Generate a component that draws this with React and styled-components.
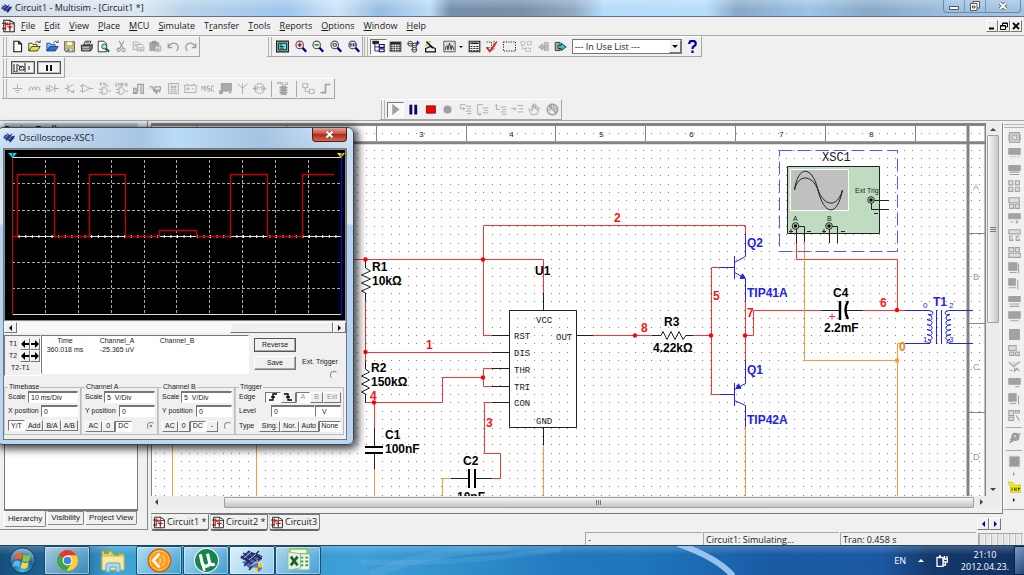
import React from "react";
import styled, { createGlobalStyle, css } from "styled-components";

const GlobalStyle = createGlobalStyle`
  * { box-sizing: border-box; }
  html, body, #root { height: 100%; }
  body {
    margin: 0;
    background: #f0f0f0;
    color: #1a1a1a;
    font-family: "Open Sans", "Noto Sans", sans-serif;
    font-size: 9px;
    line-height: 12px;
    overflow: hidden;
  }
  button, input, select { font: inherit; color: inherit; margin: 0; padding: 0; }
`;

/* ---------- icons, all on a 16 x 16 grid ---------- */

const magnifier = (inner) => (
  <g fill="none">
    <circle cx="7" cy="6" r="4.600" fill="#eee" stroke="#555" strokeWidth="1.400" />
    <path d="M10.500 9.500L15 14.500" stroke="#00007c" strokeWidth="2.800" />
    {inner}
  </g>
);

const icons = {
  page: <path d="M3.500 1.500h6l3.500 3.500v9.500h-9.500zM9.500 1.500v3.500h3.500" fill="#fff" stroke="#111" strokeWidth="1.300" />,
  sample: (
    <g>
      <path d="M1 13.500V4h4l1 1.500h5V8" fill="#ffffa0" stroke="#222" />
      <path d="M1 13.500L4.500 8H15l-3.500 5.500z" fill="#e6e63c" stroke="#222" />
      <path d="M9 3q3-3 5 0M12.500 3H15V0.500" fill="none" stroke="#222" />
    </g>
  ),
  open: (
    <g>
      <path d="M1 13.500V4h4l1 1.500h5V8" fill="#8cbcf4" stroke="#123a80" />
      <path d="M1 13.500L4.500 8H15l-3.500 5.500z" fill="#2a6fdc" stroke="#123a80" />
      <path d="M9 3q3-3 5 0M12.500 3H15V0.500" fill="none" stroke="#123a80" />
    </g>
  ),
  save: (
    <g>
      <path d="M2 2h12v12.500H3.500L2 13z" fill="#c8c87c" stroke="#444" />
      <path d="M4.500 2h7v5h-7z" fill="#ffffa0" />
      <path d="M5 10h6v4H5z" fill="#f6f6f6" stroke="#666" strokeWidth=".6" />
      <path d="M6 11h2v3H6z" fill="#333" />
    </g>
  ),
  print: (
    <g stroke="#111">
      <path d="M4.500 6l2-4.500h7L11.500 6z" fill="#fff" />
      <path d="M1.500 6.500h12l1.500-1.500v5.500l-2 3h-11z" fill="#777" />
      <path d="M3 9h8M3 12h8" stroke="#ddd" />
      <path d="M7 3.500h4" />
    </g>
  ),
  preview: (
    <g>
      <path d="M1.500 1.500h7l3 3v10h-10z" fill="#fff" stroke="#111" />
      <circle cx="9" cy="8" r="3.200" fill="#9de8e8" stroke="#222" />
      <path d="M11 10.500l4 4" stroke="#175a6a" strokeWidth="2.400" />
    </g>
  ),
  cut: (
    <g fill="none" stroke="#9a9a9a" strokeWidth="1.300">
      <path d="M5 1l5 9M11 1L6 10" />
      <circle cx="4.500" cy="12" r="2" />
      <circle cx="10.500" cy="12.500" r="2" />
    </g>
  ),
  copy: (
    <g fill="#f2f2f2" stroke="#a0a0a0">
      <path d="M1.500 2.500h6l2 2v7h-8z" />
      <path d="M6.500 5.500h6l2 2v6h-8z" />
      <path d="M3 5.500h3M3 7.500h3M8 9.500h5M8 11.500h5" />
    </g>
  ),
  paste: (
    <g>
      <path d="M1 3h11v10H1z" fill="#a6a6a6" />
      <path d="M4 1.500h5v2.500H4z" fill="#888" />
      <path d="M7.500 7.500h7v6h-7z" fill="#eee" stroke="#999" />
      <path d="M9 10h4M9 12h4" stroke="#999" />
    </g>
  ),
  undo: <path d="M1.500 4v5.500h5M1.500 9Q6 2 11 4.500t1 9" fill="none" stroke="#9c9c9c" strokeWidth="1.500" />,
  redo: <path d="M14.500 4v5.500h-5M14.500 9Q10 2 5 4.500t-1 9" fill="none" stroke="#9c9c9c" strokeWidth="1.500" />,
  full: (
    <g>
      <path d="M.5 1.500h15v13H.5z" fill="#9aa" stroke="#222" strokeWidth="1.500" />
      <path d="M3 4h10v8H3z" fill="#5be5e5" stroke="#111" />
      <path d="M4.500 6h3M4.500 8h5M4.500 10h5" stroke="#111" />
    </g>
  ),
  zoomIn: magnifier(<path d="M4.500 6h5M7 3.500v5" stroke="#c00000" strokeWidth="1.800" />),
  zoomOut: magnifier(<path d="M4.500 6h5" stroke="#0a8a0a" strokeWidth="1.800" />),
  zoomArea: magnifier(<path d="M5 4.500h4v3H5z" stroke="#222" />),
  zoomFit: magnifier(<path d="M4 4v4M6 4v4M8 4v4M10 4v4" stroke="#00007c" />),
  tree: (
    <g fill="#fff" stroke="#111">
      <path d="M3.500 4v9.500H9M3.500 8.500H9" fill="none" />
      <path d="M1 1.500h7v3H1z" fill="#222" />
      <path d="M9 5.500h6v3.500H9zM9 11h6v3.500H9z" stroke="#0a0a80" strokeWidth="1.400" />
    </g>
  ),
  sheet: (
    <g>
      <path d="M1 2h14v12.500H1z" fill="#222" />
      <path d="M2 6.500h12M2 9h12M2 11.500h12M5 5v9M8 5v9M11 5v9" stroke="#e8e8e8" />
    </g>
  ),
  database: (
    <g fill="#eee" stroke="#222">
      <circle cx="4" cy="4.500" r="3" />
      <circle cx="9" cy="7" r="3" />
      <circle cx="9" cy="12" r="3" />
      <path d="M1 4.500h6M6 7h6M6 12h6" />
      <path d="M13 1v5M10.500 3.500h5" stroke="#1414b4" strokeWidth="1.600" />
    </g>
  ),
  wizard: (
    <g fill="none" stroke="#111">
      <path d="M2 14.500h12v-4L8 8 2 10.500z" fill="#eee" strokeWidth="1.500" />
      <path d="M3 2l8 8" stroke="#111" strokeWidth="2" />
      <path d="M2 6l2 1M7 1l1 2" stroke="#d9a400" strokeWidth="1.600" />
    </g>
  ),
  grapher: (
    <g fill="none">
      <path d="M1 1.500h14v13H1z" fill="#ddd" stroke="#444" />
      <path d="M3 12V9l2-2 1 5 2-8 2 8 1-5 2 3v2" stroke="#333" strokeWidth="1.200" />
    </g>
  ),
  calc: (
    <g>
      <path d="M1.500 1.500h13v13h-13z" fill="#f2f2f2" stroke="#222" strokeWidth="1.400" />
      <path d="M3 4h10" stroke="#222" strokeWidth="2" />
      <path d="M3 8h2.500m1 0H9m1 0h3M3 10.500h2.500m1 0H9m1 0h3M3 13h2.500m1 0H9m1 0h3" stroke="#333" strokeWidth="1.400" />
    </g>
  ),
  erc: (
    <g fill="none">
      <path d="M2 2.500h6v7H2M11 1v10l-3 2" stroke="#333" strokeDasharray="2 1" />
      <path d="M2 9l4 5 8.500-12" stroke="#e01010" strokeWidth="1.900" />
    </g>
  ),
  area: <path d="M.5 2.500h15v11H.5z" fill="none" stroke="#222" strokeDasharray="1.500 1.500" strokeWidth="1.300" />,
  hierarchy: (
    <g fill="none" stroke="#aaa" strokeWidth="1.200">
      <path d="M1 2h5v4H1zM9 2h5v4H9zM7 10h6v4H7zM3 6v5h4" strokeDasharray="2 1" />
    </g>
  ),
  back: (
    <g stroke="#aaa">
      <path d="M9 3h5v10H9z" fill="#c4c4c4" />
      <path d="M11 7H7V4.500L2 8.500l5 4V10h4z" fill="#b4b4b4" />
    </g>
  ),
  forward: (
    <g stroke="#222">
      <path d="M1.500 3h6v10h-6z" fill="#aaa" />
      <path d="M5 6.500h4V4l6 4.500-6 4.500v-2.500H5z" fill="#23cfcf" />
    </g>
  ),
  ground: <path d="M8 3v5M2 8h12M5 10.500h6M7 13h2" />,
  coil: <path d="M0 10h2q0-4 2-4t2 4q0-4 2-4t2 4q0-4 2-4t2 4h1.500" />,
  diode: <path d="M0 8h4m7 0h5M4 4v8l6-4zM11 3v10M1 4v8" />,
  transistor: <path d="M2 8h4M6 3v10M6 7l7-4M6 9l7 4M10 12.500h3v-3" />,
  analog: <path d="M3 3v10l9-5zM0 5h3M0 11h3M12 8h4" />,
  ttl: (
    <g>
      <path d="M5 7v8h4q5-4 0-8zM1 9h4M1 13h4M13 11h3" />
      <path d="M2 1.500h3M3.500 1.500V5M6 1.500h3M7.500 1.500V5M10 1.500V5h3" />
    </g>
  ),
  cmos: (
    <g>
      <path d="M5 7v8h4q5-4 0-8zM1 9h4M1 13h4M13 11h3" />
      <path d="M3 1.500H1V5h2M4.500 5V1.500l1 1 1-1V5M8 1.500h2V5H8zM15 1.500h-2.500v1.700H15V5h-2.500" />
    </g>
  ),
  digital: <path d="M2 13V8h3v5zM7 13V3h7v11h-3V3M1 14h6" strokeWidth="1.600" />,
  mixed: <path d="M1 8q2-6 4 0t3 3M7 6h7v4H7zM9 10v4l2-3v-1M13 10v3" strokeWidth="1.500" />,
  indicator: <path d="M2 2h12v12H2zM5 5h2v2H5zM9 5h2v2H9zM5 9h6v3H5z" />,
  power: <path d="M1 4h14v9H1zM4 4V2M12 4V2M3 8.500h4M5 6.500v4M9.500 8.500h3" />,
  misc: <path d="M0 11V5l2 3 2-3v6M6 5v6M11 5H8v3h3v3H8M16 5h-3v6h3" />,
  display: <path d="M3 2h12v9H3zM1 11h3v3H1zM12 13h3" fill="#aaa" strokeWidth="1.500" />,
  rf: <path d="M8 15V8M2 2l6 6 6-6M8 2v6" />,
  motor: <path d="M0 8h3M13 8h3M3 6v4M13 6v4M5 11V5l3 3 3-3v6M8 2q6 0 6 6t-6 6-6-6 6-6" />,
  mcu: (
    <g>
      <path d="M1 3V0l1.500 2L4 0v3M8 0H6v3h2M10 0v3h3V0" />
      <path d="M5 5h6v11H5z" fill="#aaa" />
      <path d="M3 7h10M3 10h10M3 13h10" strokeWidth="1.400" />
    </g>
  ),
  block: <path d="M1 2h6v5H1zM4 7v5h5M9 9h6v5H9z" />,
  bus: <path d="M2 13h6V3h6" strokeWidth="2" />,
  play: <path d="M4 1v14l9-7z" fill="#a0a0a0" stroke="none" />,
  pause: <path d="M3 2h3.500v12H3zM9 2h3.500v12H9z" fill="#05056b" stroke="none" />,
  stop: <path d="M3 3.500h11v9H3z" fill="#f00" stroke="#700" />,
  record: <circle cx="8" cy="8" r="5" fill="#a0a0a0" stroke="none" />,
  stepInto: <path d="M8 2H2v5h5M5 5l2 2-2 2M8 4h7M10 7h5M8 10h7M10 13h5" />,
  stepOver: <path d="M9 2H2v12h4M4 12l2 2-2 2M8 6h7M10 9h5M8 12h7" />,
  stepOut: <path d="M7 8H3V2M1 4l2-2 2 2M8 5h7M10 8h5M8 11h7M10 14h5" />,
  runTo: <path d="M0 7h6M4 5l2 2-2 2M8 3h7M10 7h5M8 11h7" />,
  hand: <path d="M4 14L1 8l1-1 3 3V3l1-1 1 5V1l2 1v5l1-4 1 1v5l2-4 1 1-3 8z" />,
  handOff: (
    <g>
      <path d="M4 14L1 8l1-1 3 3V3l1-1 1 5V1l2 1v5l1-4 1 1v5l2-4 1 1-3 8z" />
      <circle cx="8" cy="8" r="6.500" strokeWidth="1.600" />
      <path d="M3 3l10 10" strokeWidth="1.600" />
    </g>
  ),
  help: (
    <g fill="none" stroke="#00009a" strokeWidth="2.800">
      <path d="M4 5q0-4 4-4t4 3.500q0 2-2 3T8 11M8 13v3" />
    </g>
  ),
  circuit: (
    <g fill="none">
      <path d="M2 1.500h7l5 3v10H2z" fill="#fff" stroke="#222" strokeWidth="1.200" />
      <path d="M9 1.500v4h5" stroke="#222" />
      <path d="M4 3v10M4 6h5v6M6 9h6" stroke="#e01818" strokeWidth="1.500" />
      <path d="M0 5h4M0 11h4M6 4v3M9 9v5" stroke="#222" />
    </g>
  ),
  chip: (
    <g>
      <path d="M0 8l5-5 11 3-6 7z" fill="#3a48a8" />
      <path d="M2 4l11 7M1 6l10 7M5 2l10 7M12 2L4 12M15 5l-6 9" stroke="#151f66" strokeWidth="1.200" />
      <path d="M3 8l4-4M7 10l5-5" stroke="#b7c0f0" />
    </g>
  ),
};

const Svg = styled.svg`
  width: ${({ $size }) => $size || 13}px;
  height: ${({ $size }) => $size || 13}px;
  flex: none;
  display: block;
`;

const Icon = ({ name, size }) => (
  <Svg $size={size} viewBox="0 0 16 16" fill="none" stroke={/^(page|circuit|chip)$/.test(name) ? undefined : "#a0a0a0"} aria-hidden="true">
    {icons[name]}
  </Svg>
);

/* ---------- main window chrome ---------- */

const Window = styled.div`
  position: relative;
  display: flex;
  flex-direction: column;
  height: 100vh;
`;

const TitleBar = styled.header`
  display: flex;
  align-items: center;
  flex: none;
  height: 17px;
  padding-left: 1px;
  gap: 3px;
  border-bottom: 1px solid #66727e;
  background:
    linear-gradient(rgba(255, 255, 255, 0.25), rgba(255, 255, 255, 0) 60%),
    linear-gradient(90deg, #d5dfe9 0, #dbe7f3 14%, #b8d2ea 18%, #9ec6ee 28%, #cfe4f8 33%, #97bde2 37%, #b9dcf6 42%,
      #728fac 44%, #7890aa 51%, #8faac4 56%, #b4dcfb 59%, #b6ddfa 69%, #86a9ca 72%, #9cc3e8 79%, #86a9c8 85%, #9dbfe2 93%, #a2c2e4 100%);
`;

const WindowTitle = styled.h1`
  flex: 1;
  margin: 0;
  font-size: 9px;
  font-weight: 400;
  line-height: 12px;
`;

const CaptionButtons = styled.div`
  display: flex;
  align-self: flex-start;
  height: 13px;
  margin-right: 3px;
  border: 1px solid #6c88a6;
  border-top: 0;
  border-radius: 0 0 4px 4px;
`;

const CaptionButton = styled.button`
  display: grid;
  place-items: center;
  width: ${({ $wide }) => ($wide ? 34 : 21)}px;
  border: 0;
  border-right: ${({ $wide }) => ($wide ? 0 : "1px solid #7d99b6")};
  background: none;
`;

const MenuBar = styled.nav`
  display: flex;
  align-items: center;
  flex: none;
  height: 19px;
  padding: 0 2px;
  gap: 5px;
  border-bottom: 1px solid #a8a8a8;
`;

const MenuList = styled.ul`
  display: flex;
  flex: 1;
  gap: 9px;
  margin: 0;
  padding: 0;
  list-style: none;

  a {
    color: inherit;
    text-decoration: none;
  }
`;

const raised = css`
  border: 1px solid;
  border-color: #fff #777 #777 #fff;
  background: #f0f0f0;
`;

const sunken = css`
  border: 1px solid;
  border-color: #777 #fff #fff #777;
`;

const MdiButton = styled.button`
  ${raised}
  display: grid;
  place-items: center;
  width: 12px;
  height: 12px;
`;

const MdiButtons = styled.div`
  display: flex;
`;

const ToolArea = styled.div`
  flex: none;
  background: #f0f0f0;
`;

const ToolRow = styled.div`
  display: flex;
  height: 21px;
  padding-left: ${({ $indent }) => $indent || 2}px;
`;

const ToolBar = styled.div`
  display: flex;
  align-items: center;
  width: ${({ $width }) => $width}px;
  margin-left: ${({ $gap }) => $gap || 0}px;
  padding-left: 7px;
  border-right: 1px solid #a6a6a6;
  border-bottom: 1px solid #a6a6a6;
  border-top: 1px solid #fff;
  background: linear-gradient(#b4b4b4, #b4b4b4) 1px 0 / 1px 100% no-repeat,
    linear-gradient(#b4b4b4, #b4b4b4) 4px 0 / 1px 100% no-repeat;
`;

const ToolButton = styled.button`
  display: flex;
  align-items: center;
  justify-content: center;
  flex: ${({ $wide }) => ($wide ? "1.6 1 0" : "1 1 0")};
  min-width: 0;
  height: 16px;
  gap: 3px;
  border: 1px solid transparent;
  background: none;
  ${({ $pressed }) => $pressed && css`
    ${sunken}
    background: #f8f8f8;
  `}
`;

const ToolSeparator = styled.span`
  width: 1px;
  height: 16px;
  margin: 0 3px;
  background: #aaa;
`;

const Arrow = styled.span`
  width: 0;
  height: 0;
  border: ${({ $small }) => ($small ? 2 : 3)}px solid transparent;
  ${({ $dir, $color }) => {
    const c = $color || "#111";
    if ($dir === "left") return `border-right-color: ${c}; border-left-width: 0;`;
    if ($dir === "right") return `border-left-color: ${c}; border-right-width: 0;`;
    if ($dir === "up") return `border-bottom-color: ${c}; border-top-width: 0;`;
    return `border-top-color: ${c}; border-bottom-width: 0;`;
  }}
`;

const ComboBox = styled.div`
  display: flex;
  width: 110px;
  height: 15px;
  margin: 0 2px;
  border: 1px solid #777;
  background: #fff;

  select {
    flex: 1;
    min-width: 0;
    padding-left: 2px;
    border: 0;
    appearance: none;
    background: none;
    line-height: 12px;
  }
`;

const ComboArrow = styled.span`
  ${raised}
  display: grid;
  place-items: center;
  width: 12px;
`;

const SwitchButton = styled.button`
  display: flex;
  align-items: center;
  justify-content: center;
  width: 24px;
  height: 13px;
  margin-left: 2px;
  border: 2px solid #555;
  outline: 1px solid #bbb;
  outline-offset: -2px;
  background: #f4f4f4;
`;

/* ---------- work area ---------- */

const WorkArea = styled.main`
  display: flex;
  flex: 1;
  min-height: 0;
  border-top: 1px solid #a6a6a6;
`;

const Dock = styled.aside`
  display: flex;
  flex-direction: column;
  width: 148px;
  margin-bottom: 2px;
  padding: 2px 9px 0 4px;
  border-right: 1px solid #888;
  border-bottom: 1px solid #888;
`;

const DockTitle = styled.h2`
  margin: 0;
  background: #bfcddb;
  font-size: 9px;
  font-weight: 600;
  line-height: 12px;
`;

const TreePane = styled.div`
  flex: 1;
  border: 1px solid #777;
  border-bottom-width: 2px;
  background: #fff;
`;

const DockTabs = styled.div`
  display: flex;
  flex: none;
  height: 18px;
  align-items: flex-start;
  gap: 1px;
`;

const DockTab = styled.button`
  height: ${({ $active }) => ($active ? 16 : 14)}px;
  padding: 0 3px;
  border: 1px solid #888;
  border-top: ${({ $active }) => ($active ? 0 : "1px solid #888")};
  border-left-color: #fff;
  border-radius: 0 0 2px 2px;
  background: #f0f0f0;
  font-family: "Liberation Sans", Arial, sans-serif;
  font-size: 8px;
  line-height: ${({ $active }) => ($active ? 16 : 12)}px;
  white-space: nowrap;
`;

const Documents = styled.section`
  display: flex;
  flex: 1;
  min-width: 0;
  flex-direction: column;
  margin-left: 3px;
  padding-top: 2px;
`;

const DocumentFrame = styled.div`
  display: flex;
  flex: 1;
  min-height: 0;
  flex-direction: column;
  padding-right: 3px;
  padding-bottom: 5px;
  border-right: 1px solid #888;
  border-bottom: 1px solid #777;
`;

const SheetRow = styled.div`
  display: flex;
  flex: 1;
  min-height: 0;
`;

const Sheet = styled.svg`
  flex: 1;
  min-width: 0;
  height: 100%;
  background: #fff;
`;

const ScrollBar = styled.div`
  display: flex;
  flex: none;
  align-items: center;
  justify-content: space-between;
  background: #ececec;
  ${({ $vertical }) => ($vertical
    ? "flex-direction: column; width: 13px; padding: 5px 0;"
    : "height: 12px; padding: 0 16px 0 4px;")}
`;

const ScrollThumb = styled.div`
  display: grid;
  place-items: center;
  border: 1px solid #a0a0a0;
  border-radius: 1px;
  ${({ $vertical }) => ($vertical
    ? `width: 12px; height: 188px; margin: 4px 0 auto;
       background: linear-gradient(90deg, #f6f6f6, #c8c8c8);`
    : `flex: 1; height: 11px; margin-left: 66px; margin-right: 6px;
       background: linear-gradient(#f6f6f6, #c4c4c4);`)}
`;

const Grip = styled.span`
  width: 6px;
  height: 5px;
  background: repeating-linear-gradient(${({ $vertical }) => ($vertical ? "0deg" : "90deg")}, #777 0 1px, transparent 1px 2px);
`;

const DocumentTabs = styled.div`
  display: flex;
  flex: none;
  height: 18px;
  align-items: flex-start;
  gap: 1px;
`;

const DocumentTab = styled.button`
  display: flex;
  align-items: center;
  height: 17px;
  min-width: ${({ $narrow }) => ($narrow ? 51 : 58)}px;
  padding: 1px;
  gap: 1px;
  border: 1px solid #777;
  border-top-color: ${({ $active }) => ($active ? "transparent" : "#777")};
  border-left-color: #ccc;
  border-bottom: 2px solid #666;
  border-radius: 0 0 3px 3px;
  background: #f0f0f0;
  line-height: 12px;
  white-space: nowrap;
`;

const TabScroll = styled.div`
  display: flex;
  margin: 4px 2px 0 auto;
`;

const Instruments = styled.aside`
  display: flex;
  flex-direction: column;
  align-items: center;
  justify-content: space-between;
  width: 21px;
  margin-bottom: 22px;
  padding: 10px 0 6px;
  border-bottom: 1px solid #a6a6a6;
  border-left: 1px solid #fff;
  background:
    linear-gradient(#b4b4b4, #b4b4b4) 0 3px / 100% 1px no-repeat,
    linear-gradient(#b4b4b4, #b4b4b4) 0 6px / 100% 1px no-repeat;

  hr {
    width: 16px;
    margin: 1px 0;
    border: 0;
    border-top: 1px solid #aaa;
  }
`;

const InstrumentButton = styled.button`
  display: grid;
  place-items: center;
  width: 16px;
  height: ${({ $short }) => ($short ? 6 : 13)}px;
  border: 0;
  background: none;
`;

const StatusBar = styled.footer`
  display: grid;
  grid-template-columns: 1fr 117px 136px 136px 47px;
  gap: 1px;
  flex: none;
  height: 13px;
  line-height: 13px;
`;

const StatusCell = styled.div`
  padding-left: 2px;
  border-top: 1px solid #a8a8a8;
  border-left: 1px solid #a8a8a8;
`;

const StatusMeter = styled(StatusCell)`
  margin: 1px 1px 0;
  background: repeating-linear-gradient(90deg, #bdbdbd 0 1px, #e6e6e6 1px 5px, #f4f4f4 5px 6px);
`;

/* ---------- taskbar ---------- */

const TaskBar = styled.footer`
  display: flex;
  align-items: stretch;
  flex: none;
  height: 30px;
  border-top: 1px solid #24465f;
  color: #fff;
  background:
    linear-gradient(rgba(255, 255, 255, 0.2), rgba(255, 255, 255, 0) 30%),
    linear-gradient(90deg, #15507c 0, #256e9f 8%, #3ea6d7 11%, #3693cb 25%, #3fa0d8 35%, #2f8cca 46%, #2178bd 56%, #1f76ba 63%, #1a5ba6 75%, #1b58a2 86%, #14386b 91%, #103263 100%);
`;

const TaskButton = styled.button`
  display: grid;
  place-items: center;
  width: ${({ $start }) => ($start ? 44 : 46)}px;
  margin-right: ${({ $gap }) => $gap || 0}px;
  border: ${({ $plain }) => ($plain ? "1px solid transparent" : "1px solid #1b4e70")};
  border-radius: 2px;
  box-shadow: ${({ $plain }) => ($plain ? "none" : "inset 0 0 0 1px rgba(255, 255, 255, 0.4)")};
  background: ${({ $plain, $active }) =>
    $plain ? "none"
      : $active ? "linear-gradient(135deg, #dff1fb, #8fcbec)"
        : "linear-gradient(135deg, rgba(210, 238, 250, 0.75), rgba(80, 170, 215, 0.4))"};
`;

const Beam = styled.svg`
  flex: 1;
  min-width: 0;
  height: 29px;
`;

const Tray = styled.div`
  display: flex;
  align-items: center;
  gap: 12px;
`;

const Clock = styled.time`
  width: 50px;
  text-align: center;
  line-height: 12px;
`;

const ShowDesktop = styled.button`
  align-self: stretch;
  width: 10px;
  margin-left: -8px;
  border: 1px solid #0a2344;
  border-right: 0;
  background: linear-gradient(135deg, #7d9cc0, #24497c);
`;

/* ---------- oscilloscope ---------- */

const ScopeWindow = styled.section`
  position: absolute;
  left: -3px;
  top: 127px;
  width: 357px;
  height: 318px;
  padding: 0 6px 4px 5px;
  border: 1px solid #3b4754;
  border-radius: 6px;
  box-shadow: 2px 2px 8px 2px rgba(0, 0, 0, 0.75);
  background: linear-gradient(#dbe9f6 0, #c3dbf1 7%, #dcebf8 30%, #b3d2f2 31%, #b9d6f5 100%);
  font-family: "Liberation Sans", Arial, sans-serif;
  font-size: 7px;
  line-height: 8px;
`;

const ScopeTitle = styled.header`
  display: flex;
  align-items: center;
  height: 20px;
  gap: 4px;
  background: linear-gradient(90deg, transparent, #a7c6e6 40%, #b9dcf8 50%, #a3c4e4 75%, transparent);
  font-family: "Open Sans", "Noto Sans", sans-serif;

  h2 {
    flex: 1;
    margin: 0;
    font-size: 9px;
    font-weight: 400;
    line-height: 12px;
  }
`;

const CloseButton = styled.button`
  display: grid;
  place-items: center;
  align-self: flex-start;
  width: 35px;
  height: 14px;
  border: 1px solid #5a1a1a;
  border-top: 0;
  border-radius: 0 0 4px 4px;
  background: linear-gradient(#dfa49a, #c9503f 45%, #b02b1c 50%, #d3694f);
`;

const ScopeBody = styled.div`
  display: flex;
  flex-direction: column;
  height: 292px;
  border: 1px solid #777;
  background: #f0f0f0;
`;

const ScopeScreen = styled.svg`
  display: block;
  width: 100%;
  height: 172px;
  border: 1px solid #888;
  background: #000;
`;

const ScopeScroll = styled.div`
  display: flex;
  justify-content: space-between;
  height: 11px;
  margin-top: 1px;
  background: #f8f8f8;

  button {
    ${raised}
    display: grid;
    place-items: center;
    width: 13px;
  }
`;

const ScopeThumb = styled.div`
  ${raised}
  width: 103px;
  margin-left: auto;
`;

const Readings = styled.div`
  display: flex;
  height: 50px;
  padding-top: 2px;
`;

const Cursors = styled.div`
  ${sunken}
  display: grid;
  grid-template-columns: 15px 10px 10px;
  grid-template-rows: 12px 12px 12px;
  align-items: center;
  width: 37px;
  height: 41px;
  padding-top: 2px;
`;

const CursorName = styled.span`
  padding-left: 4px;
`;

const CursorButton = styled.button`
  ${raised}
  display: grid;
  place-items: center;
  width: 10px;
  height: 12px;
`;

const CursorDelta = styled.span`
  grid-column: 1 / -1;
  padding-left: 6px;
`;

const ReadingBox = styled.div`
  ${sunken}
  width: 208px;
  height: 39px;
  background: #fff;
  line-height: 9px;
`;

const ReadingTable = styled.table`
  border-collapse: collapse;
  text-align: center;

  th {
    padding: 0;
    font-weight: 400;
  }

  td { padding: 0; }
  th:nth-child(1) { width: 46px; }
  th:nth-child(2) { width: 58px; }
  th:nth-child(3) { width: 62px; }
`;

const Actions = styled.div`
  display: flex;
  flex-direction: column;
  gap: 4px;
  margin: 3px 6px 0 5px;
`;

const PushButton = styled.button`
  width: 42px;
  height: 14px;
  border: 1px solid;
  border-color: ${({ $main }) => ($main ? "#555" : "#fff #777 #777 #fff")};
  box-shadow: inset -1px -1px #aaa;
  background: #f0f0f0;
`;

const ExtTrigger = styled.label`
  display: flex;
  flex-direction: column;
  align-items: flex-end;
  gap: 5px;
  margin-top: 23px;
  white-space: nowrap;
`;

const Radio = styled.input.attrs({ type: "radio" })`
  width: 8px;
  height: 8px;
  border: 1px solid #888;
  border-right-color: #eee;
  border-bottom-color: #eee;
  border-radius: 50%;
  appearance: none;
  background: ${({ checked }) => (checked ? "radial-gradient(#888 25%, #f4f4f4 40%)" : "#f4f4f4")};
`;

const Controls = styled.div`
  display: grid;
  grid-template-columns: 77px 77px 77px 109px;
  height: 49px;
`;

const Group = styled.fieldset`
  min-width: 0;
  margin: 0;
  padding: 0 2px 0 3px;
  border: 1px solid #bbb;
  border-left-color: #ccc;

  legend {
    padding: 0 1px;
    line-height: 8px;
  }
`;

const Field = styled.div`
  display: flex;
  align-items: center;
  justify-content: space-between;
  height: 12px;
  margin-bottom: ${({ $last }) => ($last ? 3 : 2)}px;
  white-space: nowrap;
`;

const TextBox = styled.input`
  ${sunken}
  width: ${({ $width }) => $width}px;
  height: 12px;
  padding-left: 2px;
  border-top-width: 2px;
  background: #fff;
`;

const SmallButton = styled.button`
  ${raised}
  display: grid;
  place-items: center;
  flex: 1 1 auto;
  min-width: 8px;
  height: 11px;
  color: ${({ disabled }) => (disabled ? "#999" : "inherit")};
  ${({ $on }) => $on && css`
    ${sunken}
    background: #fbfbfb;
  `}
`;

const ButtonStrip = styled.div`
  display: flex;
  align-items: center;
  width: ${({ $width }) => $width}px;
`;

/* ---------- schematic ---------- */

const RED = "#f83434";
const LABEL_RED = "#f81414";
const ORANGE = "#f99a3c";
const BLUE = "#2222f0";

const NetLabel = styled.text`
  font: bold 12px "Liberation Sans", Arial, sans-serif;
  fill: ${({ $color }) => $color || "#000"};
`;

const PinLabel = styled.text`
  font: ${({ $size }) => $size || 9}px "Liberation Mono", "Courier New", monospace;
  fill: #222;
`;

const SmallLabel = styled.text`
  font: ${({ $size }) => $size || 9}px "Liberation Sans", Arial, sans-serif;
  fill: ${({ $color }) => $color || "#222"};
`;

const dotPath = () => {
  let d = "";
  for (let y = 150; y < 496; y += 8.41) {
    for (let x = 155.3; x < 984; x += 8.41) {
      d += `M${Math.round(x)} ${Math.round(y)}h1v1h-1z`;
    }
  }
  for (let x = 155.3; x < 984; x += 8.41) d += `M${Math.round(x)} 133h1v1h-1z`;
  return d;
};

const parts = [
  [372, 271, "R1"], [372, 285, "10kΩ"], [371, 372, "R2"], [371, 386, "150kΩ"],
  [385, 439, "C1"], [385, 453, "100nF"], [463, 465, "C2"], [457, 501, "10nF"],
  [535, 275, "U1"], [664, 326, "R3"], [653, 352, "4.22kΩ"],
  [833, 297, "C4"], [824, 332, "2.2mF"],
  [747, 247, "Q2", BLUE], [747, 297, "TIP41A", BLUE], [747, 374, "Q1", BLUE], [747, 424, "TIP42A", BLUE],
  [933, 306, "T1", BLUE],
  [614, 222, "2", LABEL_RED], [426, 349, "1", LABEL_RED], [370, 400, "4", LABEL_RED], [486, 427, "3", LABEL_RED],
  [641, 332, "8", LABEL_RED], [713, 300, "5", LABEL_RED], [747, 317, "7", LABEL_RED], [880, 307, "6", LABEL_RED],
  [899, 351, "0", "#f08010"],
];

const pins = [
  [536, 323, "VCC"], [514, 339, "RST"], [514, 356, "DIS"], [514, 373, "THR"],
  [514, 390, "TRI"], [514, 406, "CON"], [556, 340, "OUT"], [536, 424, "GND"],
];

const Schematic = () => (
  <Sheet role="img" aria-label="Circuit1 schematic">
    <g transform="translate(-151 -123)">
      <path d={dotPath()} fill="#858585" />

      <g fill="none" stroke="#848484">
        <path d="M151 124.500H986" strokeWidth="3" />
        <path d="M151 142.700H986M968 125V496" strokeWidth="3" />
        <path d="M985.500 125V496" strokeWidth="2" />
        <path d="M196.500 126V141M286.500 126V141M376.500 126V141M466.500 126V141M555.500 126V141M645.500 126V141M735.500 126V141M825.500 126V141M915.500 126V141M969 233.500H985M969 323.500H985M969 412.500H985" />
        <path d="M151.500 124V496" />
      </g>
      {[1, 2, 3, 4, 5, 6, 7, 8].map((n) => (
        <PinLabel key={n} x={149 + n * 90} y={137} $size={8}>{n}</PinLabel>
      ))}
      {["A", "B", "C", "D"].map((c, i) => (
        <SmallLabel key={c} x={973} y={190 + i * 90} $color="#999">{c}</SmallLabel>
      ))}

      <g fill="none" stroke={RED}>
        <path d="M350 259.500H543.500V293M492 335.500H483.500V225.500H745.500V234" />
        <path d="M365.500 301V361M365.500 352.500H492M365.500 402.500H442.500V377.500H483.500M492 368.500H483.500V386.500H492" />
        <path d="M374.500 402V428M492 402.500H484.500V453.500H500.500V478.500H492" />
        <path d="M593 335.500H652M693 335.500H711.500M720 267.500H711.500V394.500H720M745.500 301V360" />
        <path d="M745 335.500H753.500V310.500H822M863 310.500H905M796.500 243V259.500H897.500V310" />
        <path d="M829 316.500h6M832 313.500v6" />
      </g>
      <g fill="none" stroke={ORANGE}>
        <path d="M172.500 400V496M256.500 400V496" />
        <path d="M374.500 469V496M451 478.500H442.500V496M543.500 445V496M745.500 427V496" />
        <path d="M804.500 242V360.500H897.500M905 343.500H897.500V496" />
      </g>
      <g fill="none" stroke="#222">
        <path d="M365.500 259v9l5 3-9 4 9 4-9 4 9 4-9 4 4 2v8" />
        <path d="M365.500 361v8l4 3-8 4 8 4-8 4 8 4-8 4 4 2v9" />
        <path d="M374.500 428V446M374.500 453V469M492 478.500H475M468 478.500H451" />
        <path d="M543.500 293V310M543.500 427V445M492 335.500H509M492 352.500H509M492 368.500H509M492 386.500H509M492 402.500H509M577 335.500H593" />
        <path d="M509.500 310.500H576.500V427.500H509.500z" />
        <path d="M652 335.500h9l2-4 4 8 4-8 4 8 4-8 4 8 3-4h7" />
        <path d="M822 310.500H839M846 310.500H863" />
      </g>
      <g fill="none" stroke="#000" strokeWidth="2">
        <path d="M365 447H383M365 453H383M469 469V488M475 469V488" />
        <path d="M840 301V320M848 301q-5 9 0 18" strokeWidth="2.500" />
      </g>

      <g fill="none" stroke={BLUE}>
        <path d="M720 267.500H734.500M734.500 256V279M734.500 262.500L745.500 256.500V234M734.500 272.500L745.500 278.500V301" />
        <path d="M720 394.500H734.500M734.500 383V406M734.500 389.500L745.500 383.500V360M734.500 400.500L745.500 405.500V427" />
        <path d="M740 278.500l5-.2-2.500-4.500zM736 388.500l5-.2-2.500-4.500z" fill={BLUE} />
        <path d="M905 310.500H930M905 343.500H930M949 310.500H973M949 343.500H973M936.500 310V344M941.500 310V344" />
        <path d="M929 310.500q5 1 4 3t-5 1q5 1 4 4t-5 1q6 1 5 4t-5 1q6 1 5 4t-5 1q6 1 5 4t-5 1q6 1 5 4t-4 1q4 1 3 3l-6 1" />
        <path d="M949 310.500q-5 1-4 3t5 1q-5 1-4 4t5 1q-6 1-5 4t5 1q-6 1-5 4t5 1q-6 1-5 4t5 1q-6 1-5 4t4 1q-4 1-3 3l6 1" />
        <path d="M779.500 150.500H897.500V251.500H779.500z" stroke="#5555f4" strokeDasharray="13 5" />
      </g>

      <g fill="#f00">
        {[[365.500, 259.500], [483, 259.500], [365.500, 352], [483, 377.500], [374, 402.500], [635, 335.500], [711, 335.500], [745, 335.500], [897, 310]].map(([x, y]) => (
          <circle key={`${x}-${y}`} cx={x} cy={y} r="2.200" />
        ))}
        <circle cx="897" cy="360.500" r="2.200" fill={ORANGE} />
      </g>

      <path d="M787.500 166.500H879.500V233.500H787.500z" fill="#c0dcc0" stroke="#222" />
      <path d="M790.500 169.500H848.500V210.500H790.500z" fill="#c0c0c0" stroke="#fff" />
      <g fill="none" stroke="#222">
        <path d="M794.500 190C798 165 812 165 818 190S837 218 842.500 190" />
        <path d="M794.500 190C798 174 812 174 818 190S837 209 842.500 190" />
        <path d="M796.500 229V243M796.500 226.500H804.500V242M829.500 229V243M829.500 226.500H837.500V243" />
        <path d="M871.500 200.500H889M871.500 200V209.500H889M807 231.500h4M841 231.500h4M874 213.500h4M789 231.500h4M791 229v4M822 231.500h4M824 229v4" />
      </g>
      {[[795.500, 226], [829, 226], [871, 200]].map(([x, y]) => (
        <g key={x}>
          <circle cx={x} cy={y} r="3.300" fill="#c0dcc0" stroke="#222" />
          <circle cx={x} cy={y} r="1.800" fill="#000" />
        </g>
      ))}
      <SmallLabel x={855} y={193} $size={7}>Ext Trig</SmallLabel>
      <SmallLabel x={793} y={221} $size={7}>A</SmallLabel>
      <SmallLabel x={827} y={221} $size={7}>B</SmallLabel>
      <PinLabel x={822} y={161} $size={12}>XSC1</PinLabel>

      {pins.map(([x, y, label]) => <PinLabel key={label} x={x} y={y}>{label}</PinLabel>)}
      {parts.map(([x, y, label, color]) => <NetLabel key={label} x={x} y={y} $color={color}>{label}</NetLabel>)}
      <SmallLabel x={923} y={308} $size={8} $color={BLUE}>0</SmallLabel>
      <SmallLabel x={949} y={308} $size={8} $color={BLUE}>2</SmallLabel>
      <SmallLabel x={923} y={342} $size={8} $color={BLUE}>1</SmallLabel>
      <SmallLabel x={949} y={342} $size={8} $color={BLUE}>3</SmallLabel>
    </g>
  </Sheet>
);

/* ---------- components ---------- */

const menus = ["File", "Edit", "View", "Place", "MCU", "Simulate", "Transfer", "Tools", "Reports", "Options", "Window", "Help"];

const Menu = () => (
  <MenuBar aria-label="Main menu">
    <Icon name="circuit" size={14} />
    <MenuList>
      {menus.map((name) => {
        const at = name === "Transfer" ? 1 : 0;
        return (
          <li key={name}>
            <a href="#menu">{name.slice(0, at)}<u>{name[at]}</u>{name.slice(at + 1)}</a>
          </li>
        );
      })}
    </MenuList>
    <MdiButtons>
      <MdiButton aria-label="Minimize document"><Svg $size={8} viewBox="0 0 8 8"><path d="M1 6.500h5" stroke="#000" strokeWidth="2" /></Svg></MdiButton>
      <MdiButton aria-label="Restore document"><Svg $size={8} viewBox="0 0 8 8" fill="none" stroke="#000"><path d="M2.500 3V1h5v4H6M.5 3.500h5v4h-5zM.5 4h5M2.500 1.500h5" /></Svg></MdiButton>
      <MdiButton aria-label="Close document"><Svg $size={8} viewBox="0 0 8 8"><path d="M1 1l6 6M7 1L1 7" stroke="#000" strokeWidth="1.800" /></Svg></MdiButton>
    </MdiButtons>
  </MenuBar>
);

const Tools = ({ names, pressed }) => names.map((name, i) => (
  name === "|"
    ? <ToolSeparator key={i} />
    : (
      <ToolButton key={i} aria-label={name} $pressed={name === pressed} $wide={name === "grapher"}>
        <Icon name={name} />
        {name === "grapher" && <Arrow $small />}
      </ToolButton>
    )
));

const Toolbars = () => (
  <ToolArea>
    <ToolRow>
      <ToolBar $width={198}>
        <Tools names={["page", "sample", "open", "save", "print", "preview", "cut", "copy", "paste", "undo", "redo"]} />
      </ToolBar>
      <ToolBar $width={96} $gap={67}>
        <Tools names={["full", "zoomIn", "zoomOut", "zoomArea", "zoomFit"]} />
      </ToolBar>
      <ToolBar $width={339}>
        <Tools pressed="tree" names={["tree", "sheet", "database", "wizard", "grapher", "calc", "erc", "area", "hierarchy", "back", "forward"]} />
        <ComboBox>
          <select aria-label="In Use List"><option>--- In Use List ---</option></select>
          <ComboArrow><Arrow /></ComboArrow>
        </ComboBox>
        <Tools names={["help"]} />
      </ToolBar>
    </ToolRow>
    <ToolRow>
      <ToolBar $width={63}>
        <SwitchButton aria-label="Run switch">
          <Svg $size={20} viewBox="0 0 20 10" fill="none" stroke="#222"><path d="M1 1v8h3V1M6 7q0-4 3-4t2 4H6M5 2l4 3M12 0v10" /><path d="M16 3v4" /></Svg>
        </SwitchButton>
        <SwitchButton aria-label="Pause switch">
          <Svg $size={12} viewBox="0 0 12 12" stroke="#111" strokeWidth="2"><path d="M4 3v6M8 3v6" /></Svg>
        </SwitchButton>
      </ToolBar>
    </ToolRow>
    <ToolRow>
      <ToolBar $width={333}>
        <Tools
          names={["ground", "coil", "diode", "transistor", "analog", "ttl", "cmos", "digital", "mixed", "indicator", "power", "misc", "display", "rf", "motor", "|", "mcu", "|", "block", "bus"]}
        />
      </ToolBar>
    </ToolRow>
    <ToolRow $indent={380}>
      <ToolBar $width={182}>
        <Tools pressed="play" names={["play", "pause", "stop", "record", "stepInto", "stepOver", "stepOut", "runTo", "hand", "handOff"]} />
      </ToolBar>
    </ToolRow>
  </ToolArea>
);

const gridX = [44.5, 77.5, 110.5, 143.5, 175.5, 208.5, 241.5, 274.5, 307.5];
const gridY = [183.5, 210.5, 262.5, 288.5];

const Screen = () => (
  <ScopeScreen viewBox="4 150 340 170" preserveAspectRatio="xMinYMin meet" role="img" aria-label="Channel A trace">
    <g stroke="#aaa" fill="none">
      {gridX.map((x) => <path key={x} d={`M${x} 160V314`} strokeDasharray="3 2" />)}
      {gridY.map((y) => <path key={y} d={`M11 ${y}H341`} strokeDasharray="3 2" />)}
      <path d="M11 157.500H341M11 314.500H341" stroke="#ddd" />
      <path d="M11 236.500H341" stroke="#ddd" />
      <path d="M11 236.500H341" stroke="#fff" strokeWidth="3" strokeDasharray="1 5.600" />
    </g>
    <g fill="none">
      <path d="M11.500 157V315" stroke="#d00" />
      <path d="M11 236.500H16.500V174.500H53.500V236.500H88.500V174.500H124.500V236.500H158.500V230.500H195.500V236.500H229.500V174.500H266.500V236.500H301.500V174.500H333" stroke="#c80000" strokeWidth="1.300" />
      <path d="M340.500 157V315" stroke="#1010d0" strokeWidth="1.400" />
    </g>
    <path d="M7 153h9l-4.500 5z" fill="#00e0e0" />
    <path d="M336 153h8l-4 5z" fill="#f0f000" />
    <path d="M11.500 153v3M339.500 153.500h2l-2 2.500h2" stroke="#222" fill="none" strokeWidth=".8" />
  </ScopeScreen>
);

const CursorArrow = ({ back, label }) => (
  <CursorButton aria-label={label}>
    <Svg $size={8} viewBox="0 0 8 8"><path d={back ? "M0 4l4-4v3h4v2H4v3z" : "M8 4L4 0v3H0v2h4v3z"} fill="#000" /></Svg>
  </CursorButton>
);

const Channel = ({ name, minus }) => (
  <Group>
    <legend>Channel {name}</legend>
    <Field>
      <label htmlFor={`scale-${name}`}>Scale</label>
      <TextBox id={`scale-${name}`} $width={51} defaultValue="5  V/Div" />
    </Field>
    <Field $last>
      <label htmlFor={`pos-${name}`}>Y position</label>
      <TextBox id={`pos-${name}`} $width={36} defaultValue="0" />
    </Field>
    <Field>
      <ButtonStrip $width={minus ? 56 : 47}>
        <SmallButton>AC</SmallButton>
        <SmallButton>0</SmallButton>
        <SmallButton $on>DC</SmallButton>
        {minus && <SmallButton>-</SmallButton>}
      </ButtonStrip>
      <Radio name="trigger-source" aria-label={`Trigger from channel ${name}`} checked={!minus} readOnly />
    </Field>
  </Group>
);

const Oscilloscope = () => (
  <ScopeWindow aria-label="Oscilloscope">
    <ScopeTitle>
      <Icon name="chip" size={12} />
      <h2>Oscilloscope-XSC1</h2>
      <CloseButton aria-label="Close oscilloscope">
        <Svg $size={9} viewBox="0 0 9 9"><path d="M1.500 1.500l6 6M7.500 1.500l-6 6" stroke="#555" strokeWidth="3" /><path d="M1.500 1.500l6 6M7.500 1.500l-6 6" stroke="#fff" strokeWidth="2" /></Svg>
      </CloseButton>
    </ScopeTitle>
    <ScopeBody>
      <Screen />
      <ScopeScroll>
        <button aria-label="Scroll left"><Arrow $dir="left" /></button>
        <ScopeThumb />
        <button aria-label="Scroll right"><Arrow $dir="right" /></button>
      </ScopeScroll>
      <Readings>
        <Cursors>
          <CursorName>T1</CursorName><CursorArrow back label="T1 left" /><CursorArrow label="T1 right" />
          <CursorName>T2</CursorName><CursorArrow back label="T2 left" /><CursorArrow label="T2 right" />
          <CursorDelta>T2-T1</CursorDelta>
        </Cursors>
        <ReadingBox>
          <ReadingTable>
            <thead><tr><th>Time</th><th>Channel_A</th><th>Channel_B</th></tr></thead>
            <tbody><tr><td>360.018 ms</td><td>-25.365 uV</td><td /></tr></tbody>
          </ReadingTable>
        </ReadingBox>
        <Actions>
          <PushButton $main>Reverse</PushButton>
          <PushButton>Save</PushButton>
        </Actions>
        <ExtTrigger>
          Ext. Trigger
          <Radio name="trigger-source" checked={false} readOnly />
        </ExtTrigger>
      </Readings>
      <Controls>
        <Group>
          <legend>Timebase</legend>
          <Field>
            <label htmlFor="timebase-scale">Scale</label>
            <TextBox id="timebase-scale" $width={50} defaultValue="10 ms/Div" />
          </Field>
          <Field $last>
            <label htmlFor="timebase-pos">X position</label>
            <TextBox id="timebase-pos" $width={37} defaultValue="0" />
          </Field>
          <ButtonStrip $width={70}>
            <SmallButton $on>Y/T</SmallButton>
            <SmallButton>Add</SmallButton>
            <SmallButton>B/A</SmallButton>
            <SmallButton>A/B</SmallButton>
          </ButtonStrip>
        </Group>
        <Channel name="A" />
        <Channel name="B" minus />
        <Group>
          <legend>Trigger</legend>
          <Field>
            <span>Edge</span>
            <ButtonStrip $width={76}>
              <SmallButton $on aria-label="Rising edge"><Svg $size={8} viewBox="0 0 8 8" fill="none" stroke="#000"><path d="M0 7h4V1h4M2 4h4" strokeWidth="1.300" /></Svg></SmallButton>
              <SmallButton aria-label="Falling edge"><Svg $size={8} viewBox="0 0 8 8" fill="none" stroke="#000"><path d="M0 1h4v6h4M2 4h4" strokeWidth="1.300" /></Svg></SmallButton>
              <SmallButton $on disabled>A</SmallButton>
              <SmallButton disabled>B</SmallButton>
              <SmallButton disabled>Ext</SmallButton>
            </ButtonStrip>
          </Field>
          <Field $last>
            <label htmlFor="level">Level</label>
            <ButtonStrip $width={70}>
              <TextBox id="level" $width={44} defaultValue="0" />
              <TextBox aria-label="Level unit" $width={26} defaultValue="  V" />
            </ButtonStrip>
          </Field>
          <Field>
            <span>Type</span>
            <ButtonStrip $width={82}>
              <SmallButton>Sing.</SmallButton>
              <SmallButton>Nor.</SmallButton>
              <SmallButton>Auto</SmallButton>
              <SmallButton $on>None</SmallButton>
            </ButtonStrip>
          </Field>
        </Group>
      </Controls>
    </ScopeBody>
  </ScopeWindow>
);

const instruments = [
  "M2 2h12v12H2zM5 5h6v6H5zM0 4v8M15 4v8", "M1 2h14v7H1zM3 12h2M7 12h2M12 12h2", "M1 2h14v6H1zM2 10h12M2 13h12",
  "M1 1h5v5H1zM9 1h5v5H9zM1 9h5v5H1zM9 9h5v5H9z", "M1 1h13v6H1zM2 9h5v5H2zM9 9h5v5H9z", "M1 1h14v6H1zM3 11h3M11 9v4M9 11h4",
  "M1 1h14v5H1zM6 9H2v5h4v-2M14 9h-4v5h4v-2", "M1 2h6v5H1zM9 2h5v5H9zM1 9h14v5H1z", "M1 1h10v9H1zM13 2v12M2 13h9",
  "M1 1h8v8H1zM12 2v12M1 12h9", "M1 2h14v6H1zM2 11h12M2 14h12", "M1 1h14v8H1zM3 12h10",
  "M2 2h12v12H2zM5 5h6v6H5z", "M1 2h9v6H1zM2 10h5v4H2zM9 10h5v4H9z", "M1 3l6 5 8-6M2 13h4M8 9v5l3-4 3 4", "M1 2h14v7H1zM9 12h5",
  "M1 1h9v9H1zM13 3v11M2 13h8", "M1 2h6v6H1zM9 2h5v3H9zM1 10h6v4H1zM10 8l4 6",
];

const solid = [1, 2, 5, 8, 9, 10, 11, 12, 15, 16];

const InstrumentBar = () => (
  <Instruments aria-label="Instruments">
    {instruments.map((d, i) => (
      <InstrumentButton key={d} aria-label={`Instrument ${i + 1}`}>
        <Svg viewBox="0 0 16 16" fill={solid.includes(i) ? "#a2a2a2" : "#ddd"} stroke="#a2a2a2" strokeWidth="1.300"><path d={d} /></Svg>
      </InstrumentButton>
    ))}
    <hr />
    <InstrumentButton aria-label="LabVIEW">
      <Svg viewBox="0 0 16 16" fill="none" stroke="#999" strokeWidth="3"><circle cx="9" cy="6" r="3.500" /><path d="M15 2L9 7l-7 6M3 8l3 4" strokeWidth="2" /></Svg>
    </InstrumentButton>
    <hr />
    <InstrumentButton aria-label="NI ELVISmx">
      <Svg viewBox="0 0 16 16"><path d="M2 2h12v12H2z" fill="#999" stroke="#aaa" strokeDasharray="1 1" strokeWidth="2" /></Svg>
    </InstrumentButton>
    <InstrumentButton $short aria-label="More ELVISmx"><Arrow $small $dir="right" $color="#999" /></InstrumentButton>
    <InstrumentButton aria-label="Current probe">
      <Svg viewBox="0 0 16 16"><path d="M0 1l6 1 2 3h8v9H3V7z" fill="#f5f000" stroke="#887" strokeWidth=".5" /><path d="M5 8v4M8 8v3h2M10 8v4M13 8v4M12 9h3" stroke="#222" fill="none" /></Svg>
    </InstrumentButton>
    <InstrumentButton $short aria-label="More probes"><Arrow $small $dir="right" /></InstrumentButton>
  </Instruments>
);

const StartOrb = () => (
  <Svg $size={27} viewBox="0 0 28 28">
    <defs>
      <radialGradient id="orb" cx=".5" cy=".9" r=".9">
        <stop offset="0" stopColor="#3fc0ee" /><stop offset=".5" stopColor="#1d5f90" /><stop offset="1" stopColor="#9dbfd4" />
      </radialGradient>
    </defs>
    <circle cx="14" cy="14" r="13" fill="url(#orb)" stroke="#123c5a" />
    <path d="M7 7.500q3.500-2 7 0l-1.500 6q-3.500-2-7 0z" fill="#f0602c" />
    <path d="M15 8q3.500 2 7.500 0L21 14.500q-3.500 2-7.500 0z" fill="#8cc63e" />
    <path d="M5 15q3.500-2 7 0l-1.500 6q-3.500-2-7 0z" fill="#5ab6f2" />
    <path d="M13.500 15.500q3.500 2 7 0L19 21.500q-3.500 2-7 0z" fill="#fbd04c" />
  </Svg>
);

const Chrome = () => (
  <Svg $size={23} viewBox="0 0 24 24">
    <circle cx="12" cy="12" r="11" fill="#fbd02c" />
    <path d="M12 12L2.500 6.500A11 11 0 0 1 21.500 6.500H12z" fill="#e23b2e" />
    <path d="M12 12L2.500 6.500A11 11 0 0 0 11 23l5-8.500z" fill="#3fa548" />
    <circle cx="12" cy="12" r="5.200" fill="#fff" />
    <circle cx="12" cy="12" r="4" fill="#4285e0" />
  </Svg>
);

const Explorer = () => (
  <Svg $size={26} viewBox="0 0 26 26">
    <path d="M2 3h9l2 3h11v16H2z" fill="#e9cf72" stroke="#b99a3e" />
    <path d="M4 2h5v4H4zM14 4h5v4h-5z" fill="#6cae52" />
    <path d="M2 8h22v14H2z" fill="#f8e9a2" stroke="#cdb357" />
    <path d="M6 24v-7q0-2 2-2h10q2 0 2 2v7h-4v-5h-6v5z" fill="#a9dcf2" stroke="#5ea4c8" />
  </Svg>
);

const Media = () => (
  <Svg $size={25} viewBox="0 0 24 24" fill="none">
    <circle cx="12" cy="12" r="11.500" fill="#d8600c" />
    <circle cx="12" cy="12" r="9.500" fill="#ff9a14" stroke="#ffd37a" />
    <path d="M12 5.500L6 12l6 6.500" stroke="#fff" strokeWidth="2.500" />
    <path d="M12 9q2 3 0 6M15 7q4 5 0 10" stroke="#ffd28a" strokeWidth="1.300" />
  </Svg>
);

const Torrent = () => (
  <Svg $size={25} viewBox="0 0 24 24">
    <circle cx="12" cy="12" r="11.500" fill="#12854a" stroke="#fff" />
    <path d="M6 6l2 9q1 2.500 3.500 2.500 3 0 3.500-3M13 5.500l2 8.500q1 3 5 1.500" fill="none" stroke="#fff" strokeWidth="3" />
    <path d="M8 14l2 8" stroke="#fff" strokeWidth="2.500" />
  </Svg>
);

const MultisimTask = () => (
  <Svg $size={26} viewBox="0 0 26 26">
    <path d="M1 10l8-7 13 4-7 10z" fill="#34418c" />
    <path d="M3 14l8 7 12-10-4-2" fill="#5964ae" />
    <path d="M4 5l15 9M2 8l14 10M9 3l14 8M20 3L5 18M23 8L10 22" stroke="#1b2250" strokeWidth="1.300" />
    <path d="M5 10l7-6M10 12l7-6M12 18l7-6" stroke="#c7ccf2" />
    <path d="M19 14l5 2q0 6-5 9-5-3-5-9z" fill="#f5c52c" stroke="#e8e8e8" strokeWidth=".7" />
    <path d="M19 14.500v5h-4.800q-.5-2 0-3.500zM19 19.500h4.500q-1 3-4.500 5z" fill="#3c7fd0" />
  </Svg>
);

const Excel = () => (
  <Svg $size={25} viewBox="0 0 26 26">
    <path d="M4 1h18v5H4z" fill="#f3f8f0" stroke="#7fc84a" strokeWidth="1.500" />
    <path d="M12 7h12v15H12z" fill="#f3f8f0" stroke="#cfe2c8" />
    <path d="M15 9h3v2h-3zM20 9h3v2h-3zM15 13h3v2h-3zM20 13h3v2h-3zM15 17h3v2h-3zM20 17h3v2h-3z" fill="#4c9a48" />
    <path d="M2 4l13 2v15L2 23z" fill="#e3f1dc" stroke="#8fbf86" />
    <path d="M5 9l7 9M12 9l-7 9" stroke="#1d6030" strokeWidth="2.800" />
  </Svg>
);

const Battery = () => (
  <Svg $size={12} viewBox="0 0 12 12" fill="none" stroke="#fff">
    <path d="M1 2.500h6v9H1zM3 1h2M8.500 1v3M11 1v3M7.500 4h4v3h-4zM9.500 7v3h-2" strokeWidth="1.300" />
  </Svg>
);

const App = () => (
  <>
    <GlobalStyle />
    <Window>
      <TitleBar>
        <Icon name="chip" size={11} />
        <WindowTitle>Circuit1 - Multisim - [Circuit1 *]</WindowTitle>
        <CaptionButtons>
          <CaptionButton aria-label="Minimize"><Svg $size={10} viewBox="0 0 10 10"><path d="M.5 5.500h9v3h-9z" fill="#fff" stroke="#555" /></Svg></CaptionButton>
          <CaptionButton aria-label="Restore"><Svg $size={10} viewBox="0 0 10 10" fill="#fff" stroke="#555"><path d="M3 .5h6.500V7H3z" /><path d="M.5 2.500H7v7H.5z" /><path d="M2.500 5h2.500v2H2.500z" /></Svg></CaptionButton>
          <CaptionButton $wide aria-label="Close"><Svg $size={10} viewBox="0 0 10 10"><path d="M2 2l6 6M8 2L2 8" stroke="#555" strokeWidth="3.600" /><path d="M2 2l6 6M8 2L2 8" stroke="#fff" strokeWidth="2" /></Svg></CaptionButton>
        </CaptionButtons>
      </TitleBar>
      <Menu />
      <Toolbars />

      <WorkArea>
        <Dock>
          <DockTitle>Design Toolbox</DockTitle>
          <TreePane />
          <DockTabs>
            <DockTab $active>Hierarchy</DockTab>
            <DockTab>Visibility</DockTab>
            <DockTab>Project View</DockTab>
          </DockTabs>
        </Dock>
        <Documents>
          <DocumentFrame>
            <SheetRow>
              <Schematic />
              <ScrollBar $vertical>
                <Arrow $dir="up" $color="#444" />
                <ScrollThumb $vertical><Grip $vertical /></ScrollThumb>
                <Arrow $color="#444" />
              </ScrollBar>
            </SheetRow>
            <ScrollBar>
              <Arrow $dir="left" $color="#444" />
              <ScrollThumb><Grip /></ScrollThumb>
              <Arrow $dir="right" $color="#444" />
            </ScrollBar>
          </DocumentFrame>
          <DocumentTabs>
            <DocumentTab $active><Icon name="circuit" />Circuit1 *</DocumentTab>
            <DocumentTab><Icon name="circuit" />Circuit2 *</DocumentTab>
            <DocumentTab $narrow><Icon name="circuit" />Circuit3</DocumentTab>
            <TabScroll>
              <MdiButton aria-label="Previous tab"><Arrow $dir="left" $color="#00007c" /></MdiButton>
              <MdiButton aria-label="Next tab"><Arrow $dir="right" $color="#00007c" /></MdiButton>
            </TabScroll>
          </DocumentTabs>
        </Documents>
        <InstrumentBar />
      </WorkArea>

      <StatusBar>
        <span />
        <StatusCell>-</StatusCell>
        <StatusCell>Circuit1: Simulating...</StatusCell>
        <StatusCell>Tran: 0.458 s</StatusCell>
        <StatusMeter />
      </StatusBar>

      <TaskBar>
        <TaskButton $plain $start aria-label="Start"><StartOrb /></TaskButton>
        <TaskButton aria-label="Chrome"><Chrome /></TaskButton>
        <TaskButton $plain aria-label="Explorer"><Explorer /></TaskButton>
        <TaskButton $gap={1} aria-label="Media player"><Media /></TaskButton>
        <TaskButton aria-label="Torrent"><Torrent /></TaskButton>
        <TaskButton $active aria-label="Multisim"><MultisimTask /></TaskButton>
        <TaskButton aria-label="Excel"><Excel /></TaskButton>
        <Beam aria-hidden="true">
          <g fill="none" stroke="#8ccbf2">
            <path d="M50 29Q110 4 190 0" strokeOpacity=".15" strokeWidth="9" />
            <path d="M40 16Q130 20 240 3" strokeOpacity=".15" strokeWidth="5" />
            <path d="M357 -2Q397 12 412 30" stroke="#a9d4fb" strokeOpacity=".85" strokeWidth="6" />
          </g>
        </Beam>
        <Tray>
          <span>EN</span>
          <Arrow $dir="up" $color="#fff" />
          <Battery />
          <Clock>21:10<br />2012.04.23.</Clock>
          <ShowDesktop aria-label="Show desktop" />
        </Tray>
      </TaskBar>
    </Window>
    <Oscilloscope />
  </>
);

export default App;
